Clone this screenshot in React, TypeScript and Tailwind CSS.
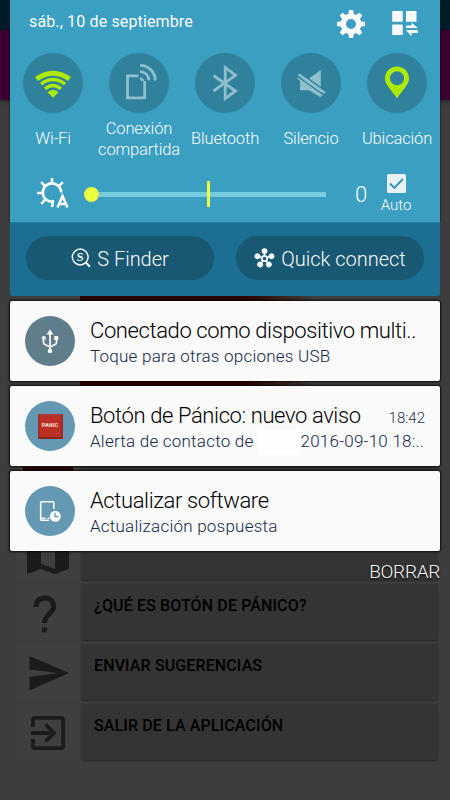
import type { ReactNode } from "react";

interface ToggleProps {
  label: string;
  children: ReactNode;
}

function WifiIcon() {
  return (
    <svg viewBox="0 0 60 60" className="size-[60px]" fill="none" stroke="#aeea00" strokeWidth="3.400">
      <path d="M13.500 26 Q30 14.500 46.500 26" strokeWidth="4.800" />
      <path d="M18 31.200 Q30 22 42 31.200" />
      <path d="M22 35.800 Q30 29 38 35.800" />
      <path d="M24.500 39.200 Q30 34.800 35.500 39.200 L30 44.800Z" fill="#aeea00" stroke="none" />
    </svg>
  );
}

function TetheringIcon() {
  return (
    <svg viewBox="0 0 60 60" className="size-[60px]" fill="none" stroke="#8fbfcd" strokeWidth="2.800">
      <path d="M29.500 22.800H18.500V44.800H35.700V28" />
      <path d="M31 25.600 A3 3 0 0 1 33.800 28" />
      <path d="M31 18.600 A8.600 8.600 0 0 1 39.800 27.400" />
      <path d="M31 12.300 A15.300 15.300 0 0 1 46.300 27.600" />
    </svg>
  );
}

function BluetoothIcon() {
  return (
    <svg viewBox="0 0 60 60" className="size-[60px]" fill="none" stroke="#8fbfcd" strokeWidth="2.800">
      <path d="M18.500 22.500 L40.500 38 L30.200 45.500 V14.500 L40.500 22.300 L18.500 38" />
    </svg>
  );
}

function MuteIcon() {
  return (
    <svg viewBox="0 0 60 60" className="size-[60px]" fill="#8fbfcd">
      <path d="M19 25.500H28L39.800 17V44.500L28 37.300H19Z" />
      <path d="M17.500 19L46 39.200" stroke="#2f819c" strokeWidth="1.600" />
      <path d="M16.500 24.700L41.500 42.300" stroke="#8fbfcd" strokeWidth="2.200" />
      <path d="M15.500 22.700L43.500 42.500" stroke="#2f819c" strokeWidth="1.400" />
      <path d="M17.500 21.300L43.800 39.900" stroke="#8fbfcd" strokeWidth="2.500" />
    </svg>
  );
}

function PinIcon() {
  return (
    <svg viewBox="0 0 60 60" className="size-[60px]" fill="#aeea00">
      <path
        fillRule="evenodd"
        d="M30 13.500c-6.700 0-12 5.300-12 12C18 32 25 37.500 30 45.500 35 37.500 42 32 42 25.500c0-6.700-5.300-12-12-12Zm0 4.800a7 7 0 1 1 0 14 7 7 0 0 1 0-14Z"
      />
    </svg>
  );
}

function GearIcon() {
  const teeth = [0, 45, 90, 135, 180, 225, 270, 315];
  return (
    <svg viewBox="-14 -14 28 28" className="size-7">
      <circle r="7.700" fill="none" stroke="#fafafa" strokeWidth="5.400" />
      {teeth.map((a) => (
        <path key={a} d="M-2.800 -9.500L-2 -14H2L2.800 -9.500Z" fill="#fafafa" transform={`rotate(${a})`} />
      ))}
    </svg>
  );
}

function PanelsIcon() {
  return (
    <svg viewBox="0 0 28 28" className="size-7" fill="#fafafa">
      <path d="M1.200 1h10.500v10.800H1.200zM15 1h10.500v10.800H15zM1.200 14.500h10.500v10.500H1.200z" />
      <path d="M15 15.500H20.500V12.800L27 18H15zM27 20H15L20.500 26.500V23H27z" />
    </svg>
  );
}

function BrightnessIcon() {
  return (
    <svg viewBox="0 0 34 32" className="h-8 w-[34px]" fill="none" stroke="#fafafa" strokeWidth="2.600">
      <path d="M17.800 24.600A9.200 9.200 0 1 1 25.200 15.500" />
      <path d="M16 1V6M1 16H6M5.200 5.200L8.800 8.800M26.800 5.200L23.200 8.800M5.200 26.800L8.800 23.200M17 23L16 30" />
      <path d="M21.500 30.500L26.500 19L31.500 30.500M23 27H30" />
    </svg>
  );
}

function SearchIcon() {
  return (
    <svg viewBox="0 0 20 20" className="size-5" fill="none" stroke="#fafafa" strokeWidth="1.500">
      <circle cx="9.200" cy="9" r="7.900" />
      <path d="M14.800 14.500L19 18.800" strokeWidth="2" />
      <text
        x="9.200"
        y="12.800"
        textAnchor="middle"
        fill="#fafafa"
        stroke="none"
        fontFamily="Liberation Serif, serif"
        fontWeight="700"
        fontSize="12"
      >
        S
      </text>
    </svg>
  );
}

function ConnectIcon() {
  const arms = [0, 72, 144, 216, 288];
  return (
    <svg viewBox="-10.500 -10.500 21 21" className="size-[21px]" fill="#fafafa">
      <circle r="2.700" fill="none" stroke="#fafafa" strokeWidth="1.800" />
      {arms.map((a) => (
        <g key={a} transform={`rotate(${a})`}>
          <rect x="-.8" y="-6" width="1.600" height="4" />
          <circle cy="-7.400" r="2.900" />
        </g>
      ))}
    </svg>
  );
}

function UsbIcon() {
  return (
    <svg viewBox="0 0 50 50" className="size-[50px]" fill="none" stroke="#fafafa" strokeWidth="1.700">
      <path d="M25 17V35M18.500 22V26.500Q18.500 28 20 28.500L25 31L30 28.500Q31.500 28 31.500 26.500V22" />
      <g fill="#fafafa" stroke="none">
        <path d="M25 13.500L28.500 18.500H21.500Z" />
        <circle cx="25" cy="35" r="2.300" />
        <circle cx="18.800" cy="22" r="2.100" />
        <path d="M29.300 20H33.200V24H29.300z" />
      </g>
    </svg>
  );
}

function PanicIcon() {
  return (
    <div className="flex size-[25px] items-center justify-center border-2 border-t-[#ae3832] border-r-[#a12b25] border-b-[#8b2722] border-l-[#a22e29] bg-[#bc2f26]">
      <span className="-mt-px text-[5.500px] leading-none font-bold tracking-[0.100px] text-[#fbe3df]">PANIC</span>
    </div>
  );
}

function UpdateIcon() {
  return (
    <svg viewBox="0 0 50 50" className="size-[50px]" fill="none" stroke="#fafafa" strokeWidth="1.600">
      <path d="M24 34.200H16.500Q15.700 34.200 15.700 33.400V16.500Q15.700 15.700 16.500 15.700H28Q28.800 15.700 28.800 16.500V23" />
      <path d="M16 32.300H20.500M22.500 32.300H24.500" />
      <circle cx="30.300" cy="30.300" r="5.500" fill="#fafafa" stroke="none" />
      <path d="M30 26.800V30.700H33.500" stroke="#6599b3" strokeWidth="1.300" />
    </svg>
  );
}

function QuickToggle({ label, children }: ToggleProps) {
  return (
    <div className="flex w-[86px] flex-col items-center">
      <div className="size-[60px] rounded-full bg-[#2f819c]">{children}</div>
      <div className="flex h-[51px] items-center text-center text-[16.500px] leading-[21px] font-[350] tracking-[-0.150px] whitespace-pre-line text-[#f8fcfd]">
        {label}
      </div>
    </div>
  );
}

interface NotificationProps {
  title: string;
  time?: string;
  iconClass: string;
  icon: ReactNode;
  children: ReactNode;
}

function Notification({ title, time, iconClass, icon, children }: NotificationProps) {
  return (
    <div className="mt-[5px] flex h-20 rounded-[2px] bg-[#fafafa] pl-[15px] shadow-[0_0_2px_1px_rgba(0,0,0,0.8)]">
      <div className={`mt-[15px] flex size-[50px] shrink-0 items-center justify-center rounded-full ${iconClass}`}>
        {icon}
      </div>
      <div className="ml-[15px] min-w-0 flex-1 pt-[16px] pr-[15px] whitespace-nowrap">
        <div className="flex h-[27px] items-baseline justify-between">
          <span className="text-[22px] leading-[27px] tracking-[-0.390px] text-black">{title}</span>
          {time && <span className="text-[15px] leading-5 text-[#1c2f4c]">{time}</span>}
        </div>
        <div className="flex text-[17px] leading-[24px] font-[350] tracking-[0.230px] text-[#11284a]">{children}</div>
      </div>
    </div>
  );
}

function MenuRow({ label, children }: ToggleProps) {
  return (
    <div className="flex h-[60px] items-start pl-4">
      <div className="flex h-[56px] w-[64px] items-center justify-center bg-[#3f3f3f]">{children}</div>
      <div className="ml-px h-[56px] w-[357px] rounded-[2px] bg-[#343434] pt-[11px] pl-[13px] text-base leading-[22px] font-medium tracking-[0.120px] text-black shadow-[0_1px_2px_rgba(0,0,0,0.35)]">
        {label}
      </div>
    </div>
  );
}

// The app that stays dimmed behind the open notification shade
function DimmedApp() {
  return (
    <div className="flex h-full flex-col bg-[#3d3d3d]">
      <div className="h-[30px] bg-[#001c29]" />
      <div className="h-[70px] bg-[#390031] shadow-[0_1px_4px_rgba(0,0,0,0.5)]" />
      <div className="flex h-[304px] items-end pl-20">
        <div className="h-[134px] w-[235px] rounded-[10px] bg-linear-to-r from-[#2c0000] from-70% to-[#3d3d3d]" />
      </div>
      <MenuRow label="" children={null} />
      <MenuRow label="">
        <div className="h-[50px] w-[50px] bg-[#250000]" />
      </MenuRow>
      <MenuRow label="">
        <svg viewBox="0 0 44 44" className="mt-1 size-11" fill="#1b1b1b">
          <path fillRule="evenodd" d="M1 3L15 0L29 5L43 0V37L29 42L15 37L1 42ZM15 5V32L29 37V10Z" />
        </svg>
      </MenuRow>
      <MenuRow label="¿QUÉ ES BOTÓN DE PÁNICO?">
        <svg viewBox="0 0 24 38" className="mt-1 -ml-1.5 h-[38px] w-6" fill="none" stroke="#1b1b1b" strokeWidth="5">
          <path d="M3.200 12C3.200 6 6.500 3 12.200 3S20.700 6.500 20.700 11.500C20.700 18 11.500 19.500 11.500 28" />
          <path d="M9 32.500H14V37.500H9z" fill="#1b1b1b" stroke="none" />
        </svg>
      </MenuRow>
      <MenuRow label="ENVIAR SUGERENCIAS">
        <svg viewBox="0 0 40 34" className="mt-0.5 ml-0.5 h-[34px] w-10" fill="#1b1b1b">
          <path d="M.5 0L40 17L.5 34.500V21L29 17L.5 13.500Z" />
        </svg>
      </MenuRow>
      <MenuRow label="SALIR DE LA APLICACIÓN">
        <svg viewBox="0 0 34 34" className="mt-0.5 size-[34px]" fill="none" stroke="#1b1b1b" strokeWidth="3.800">
          <path d="M1.900 11V4Q1.900 1.900 4 1.900H30Q32.100 1.900 32.100 4V30Q32.100 32.100 30 32.100H4Q1.900 32.100 1.900 30V23" />
          <path d="M0 17H22M14.500 8.500L23 17L14.500 25.500" />
        </svg>
      </MenuRow>
    </div>
  );
}

export default function App() {
  return (
    <div className="relative h-[800px] w-[450px] overflow-hidden font-[Roboto,sans-serif]">
      <DimmedApp />

      <div className="absolute inset-y-0 left-[10px] w-[430px] font-light">
        <div className="h-[222px] bg-[#3b9fc1] shadow-[0_0_2px_rgba(0,0,0,0.8)]">
          <div className="flex h-[53px] items-start pr-[21px] pl-[19px] text-[#fafafa]">
            <span className="mt-3 text-base leading-5 font-normal tracking-[0.140px]">sáb., 10 de septiembre</span>
            <div className="mt-[10px] ml-auto flex gap-[26px]">
              <GearIcon />
              <PanelsIcon />
            </div>
          </div>

          <div className="flex">
            <QuickToggle label="Wi-Fi">
              <WifiIcon />
            </QuickToggle>
            <QuickToggle label={"Conexión\ncompartida"}>
              <TetheringIcon />
            </QuickToggle>
            <QuickToggle label="Bluetooth">
              <BluetoothIcon />
            </QuickToggle>
            <QuickToggle label="Silencio">
              <MuteIcon />
            </QuickToggle>
            <QuickToggle label="Ubicación">
              <PinIcon />
            </QuickToggle>
          </div>

          <div className="flex h-[58px] pl-[26px] text-[#fafafa]">
            <div className="mt-[13px]">
              <BrightnessIcon />
            </div>
            <div className="mt-[17px] ml-[14px] flex h-[26px] w-[242px] items-center">
              <div className="size-[15px] rounded-full bg-[#eeff41]" />
              <div className="h-[5px] w-[108px] bg-[#78cce0]" />
              <div className="h-[26px] w-[3px] bg-[#eeff41]" />
              <div className="h-[5px] flex-1 bg-[#78cce0]" />
            </div>
            <div className="mt-[18px] ml-[29px] w-[13px] text-[22px] leading-[26px] font-[350]">0</div>
            <div className="mt-[10px] ml-[8px] flex w-[40px] flex-col items-center">
              <svg viewBox="0 0 19 19" className="size-[19px]">
                <rect width="19" height="19" rx="1.500" fill="#e8f1f4" />
                <path d="M3 9.500L7.300 13.800L16 5" fill="none" stroke="#2b93b7" strokeWidth="1.900" />
              </svg>
              <div className="mt-[2px] text-[15px] leading-[20px] font-[350]">Auto</div>
            </div>
          </div>
        </div>

        <div className="flex h-[74px] justify-between rounded-b-[2px] border-t border-[#257ca1] bg-[#1c6e93] px-4 pt-[13px] text-[20px] text-[#fafafa]">
          <div className="flex h-11 w-[188px] items-center justify-center gap-[6px] rounded-full bg-[#185872]">
            <SearchIcon />
            <span className="pt-px font-[350]">S Finder</span>
          </div>
          <div className="flex h-11 w-[188px] items-center justify-center gap-[6px] rounded-full bg-[#185872]">
            <ConnectIcon />
            <span className="pt-px font-[350]">Quick connect</span>
          </div>
        </div>

        <Notification title="Conectado como dispositivo multi.." iconClass="bg-[#607d8b]" icon={<UsbIcon />}>
          Toque para otras opciones USB
        </Notification>
        <Notification
          title="Botón de Pánico: nuevo aviso"
          time="18:42"
          iconClass="bg-[#6599b3]"
          icon={<PanicIcon />}
        >
          <span>Alerta de contacto de</span>
          <span className="mr-[1px] ml-[3px] h-[26px] w-[43px] bg-[#fdfdfd]" />
          <span>2016-09-10 18:..</span>
        </Notification>
        <Notification title="Actualizar software" iconClass="bg-[#6599b3]" icon={<UpdateIcon />}>
          Actualización pospuesta
        </Notification>

        <div className="mt-[9px] text-right text-[19px] leading-6 tracking-[-0.300px] text-[#fafafa] [text-shadow:0_1px_2px_#000]">
          BORRAR
        </div>
      </div>
    </div>
  );
}
